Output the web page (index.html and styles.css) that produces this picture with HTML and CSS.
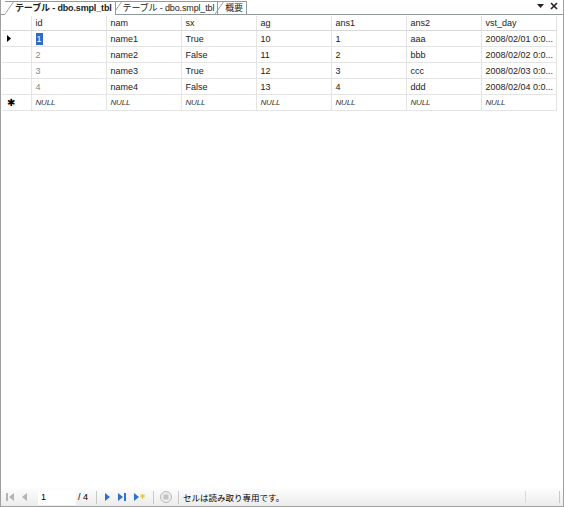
FILE: index.html
```html
<!DOCTYPE html>
<html lang="ja">
<head>
    <meta charset="UTF-8">
    <title>テーブル - dbo.smpl_tbl</title>
    <link rel="stylesheet" href="styles.css">
</head>
<body>
<div class="window">
    <div class="tabbar">
        <div class="tab active">テーブル - dbo.smpl_tbl</div>
        <div class="tab">テーブル - dbo.smpl_tbl</div>
        <div class="tab">概要</div>
        <div class="tab-tools">
            <svg width="7" height="5" viewBox="0 0 7 5"><path d="M0 0h7L3.5 4z" fill="#222"/></svg>
            <svg width="8" height="8" viewBox="0 0 8 8"><path d="M1 1l6 6M7 1L1 7" stroke="#222" stroke-width="1.6"/></svg>
        </div>
    </div>

    <div class="grid-area">
        <table class="grid">
            <colgroup>
                <col class="c-head">
                <col><col><col><col><col><col><col>
            </colgroup>
            <thead>
                <tr>
                    <th></th><th>id</th><th>nam</th><th>sx</th><th>ag</th><th>ans1</th><th>ans2</th><th>vst_day</th>
                </tr>
            </thead>
            <tbody>
                <tr>
                    <td class="rowhead"><svg width="4" height="7" viewBox="0 0 4 7"><path d="M0 0l4 3.5L0 7z" fill="#000"/></svg></td>
                    <td class="ro"><span class="sel">1</span></td><td>name1</td><td>True</td><td>10</td><td>1</td><td>aaa</td><td>2008/02/01 0:0...</td>
                </tr>
                <tr>
                    <td class="rowhead"></td>
                    <td class="ro">2</td><td>name2</td><td>False</td><td>11</td><td>2</td><td>bbb</td><td>2008/02/02 0:0...</td>
                </tr>
                <tr>
                    <td class="rowhead"></td>
                    <td class="ro">3</td><td>name3</td><td>True</td><td>12</td><td>3</td><td>ccc</td><td>2008/02/03 0:0...</td>
                </tr>
                <tr>
                    <td class="rowhead"></td>
                    <td class="ro">4</td><td>name4</td><td>False</td><td>13</td><td>4</td><td>ddd</td><td>2008/02/04 0:0...</td>
                </tr>
                <tr class="newrow">
                    <td class="rowhead star">✱</td>
                    <td>NULL</td><td>NULL</td><td>NULL</td><td>NULL</td><td>NULL</td><td>NULL</td><td>NULL</td>
                </tr>
            </tbody>
        </table>
    </div>

    <div class="statusbar">
        <svg class="nav" width="8" height="8" viewBox="0 0 8 8"><path d="M0 0h2v8H0z M8 0v8L3 4z" fill="#b4b4b4"/></svg>
        <svg class="nav" width="5" height="8" viewBox="0 0 5 8"><path d="M5 0v8L0 4z" fill="#b4b4b4"/></svg>
        <div class="pos-box">1</div>
        <span class="count">/ 4</span>
        <span class="sep"></span>
        <svg class="nav" width="5" height="8" viewBox="0 0 5 8"><path d="M0 0l5 4-5 4z" fill="#2f6fd0"/></svg>
        <svg class="nav" width="8" height="8" viewBox="0 0 8 8"><path d="M0 0l5 4-5 4z M6 0h2v8H6z" fill="#2f6fd0"/></svg>
        <svg class="nav" width="11" height="8" viewBox="0 0 11 8"><path d="M0 0l5 4-5 4z" fill="#2f6fd0"/><path d="M6 3h5M8.5 1v5M7 1.5l3 3M10 1.5l-3 3" stroke="#e8c040" stroke-width="1"/></svg>
        <span class="sep"></span>
        <svg class="stop" width="12" height="12" viewBox="0 0 12 12"><circle cx="6" cy="6" r="5.5" fill="#eee" stroke="#bbb"/><rect x="3.5" y="3.5" width="5" height="5" fill="#c4c4c4"/></svg>
        <span class="sep"></span>
        <span class="msg">セルは読み取り専用です。</span>
        <span class="grip"></span>
    </div>
</div>
</body>
</html>
```

FILE: styles.css
```css
body {
    margin: 0;
    font-family: "Liberation Sans", "Noto Sans CJK JP", sans-serif;
    font-size: 9px;
    color: #000;
    background: #fff;
}
.window {
    width: 564px;
    height: 507px;
    box-sizing: border-box;
    border: 1px solid #a0a0a0;
    border-top: none;
    display: flex;
    flex-direction: column;
    background: #fff;
}
.tabbar {
    height: 14px;
    display: flex;
    align-items: flex-end;
    padding-left: 4px;
    border-bottom: 1px solid #919b9c;
    flex-shrink: 0;
}
.tab {
    position: relative;
    height: 12px;
    line-height: 12px;
    padding: 0 3px 0 10px;
    margin-left: -3px;
    border-top: 1px solid #919b9c;
    border-right: 1px solid #919b9c;
    color: #222;
    white-space: nowrap;
    letter-spacing: -0.15px;
}
.tab:first-child {
    margin-left: 0;
}
.tab::before {
    content: "";
    position: absolute;
    left: 0;
    top: -1px;
    width: 9px;
    height: 13px;
    background: linear-gradient(to bottom right, transparent 46%, #919b9c 50%, transparent 56%);
}
.tab.active {
    z-index: 2;
    font-weight: bold;
    height: 13px;
    margin-bottom: -1px;
    background: #fff;
}
.tab-tools {
    margin-left: auto;
    display: flex;
    align-items: center;
    gap: 6px;
    padding: 0 5px 2px 0;
    align-self: center;
}
.grid-area {
    flex: 1;
    padding-left: 1px;
    padding-top: 1px;
}
.grid {
    border-collapse: collapse;
    table-layout: fixed;
    width: 554px;
}
.grid col {
    width: 75px;
}
.grid col.c-head {
    width: 29px;
}
.grid th,
.grid td {
    height: 15px;
    padding: 0 4px;
    border-right: 1px solid #e4e4e4;
    border-bottom: 1px solid #e4e4e4;
    text-align: left;
    font-weight: normal;
    white-space: nowrap;
    overflow: hidden;
    color: #222;
}
.grid th {
    height: 14px;
    border-bottom-color: #d8d8d8;
}
.grid td.ro {
    color: #888;
}
.grid tr:first-child td.ro {
    color: #fff;
}
.sel {
    background: #316ac5;
    color: #fff;
    padding: 1px 1px;
}
.grid td.rowhead {
    padding-left: 5px;
}
.grid td.star {
    font-size: 10px;
    font-style: normal;
    color: #000;
}
.newrow td {
    font-style: italic;
    font-size: 8px;
    letter-spacing: -0.2px;
    color: #333;
}
.statusbar {
    height: 18px;
    flex-shrink: 0;
    display: flex;
    align-items: center;
    gap: 8px;
    padding-left: 5px;
    background: linear-gradient(#fdfdfd, #ececec);
    position: relative;
}
.nav {
    flex-shrink: 0;
}
.pos-box {
    width: 35px;
    height: 15px;
    line-height: 15px;
    background: #fff;
    padding-left: 3px;
    margin-left: 3px;
}
.count {
    margin-left: -6px;
}
.sep {
    width: 1px;
    height: 13px;
    background: #c8c8c8;
}
.stop {
    margin: 0 -2px;
}
.msg {
    margin-left: -4px;
    font-size: 8.5px;
}
.grip {
    position: absolute;
    right: 3px;
    top: 3px;
    width: 1px;
    height: 12px;
    background: #c8c8c8;
    box-shadow: -34px 0 0 #d8d8d8;
}
```
